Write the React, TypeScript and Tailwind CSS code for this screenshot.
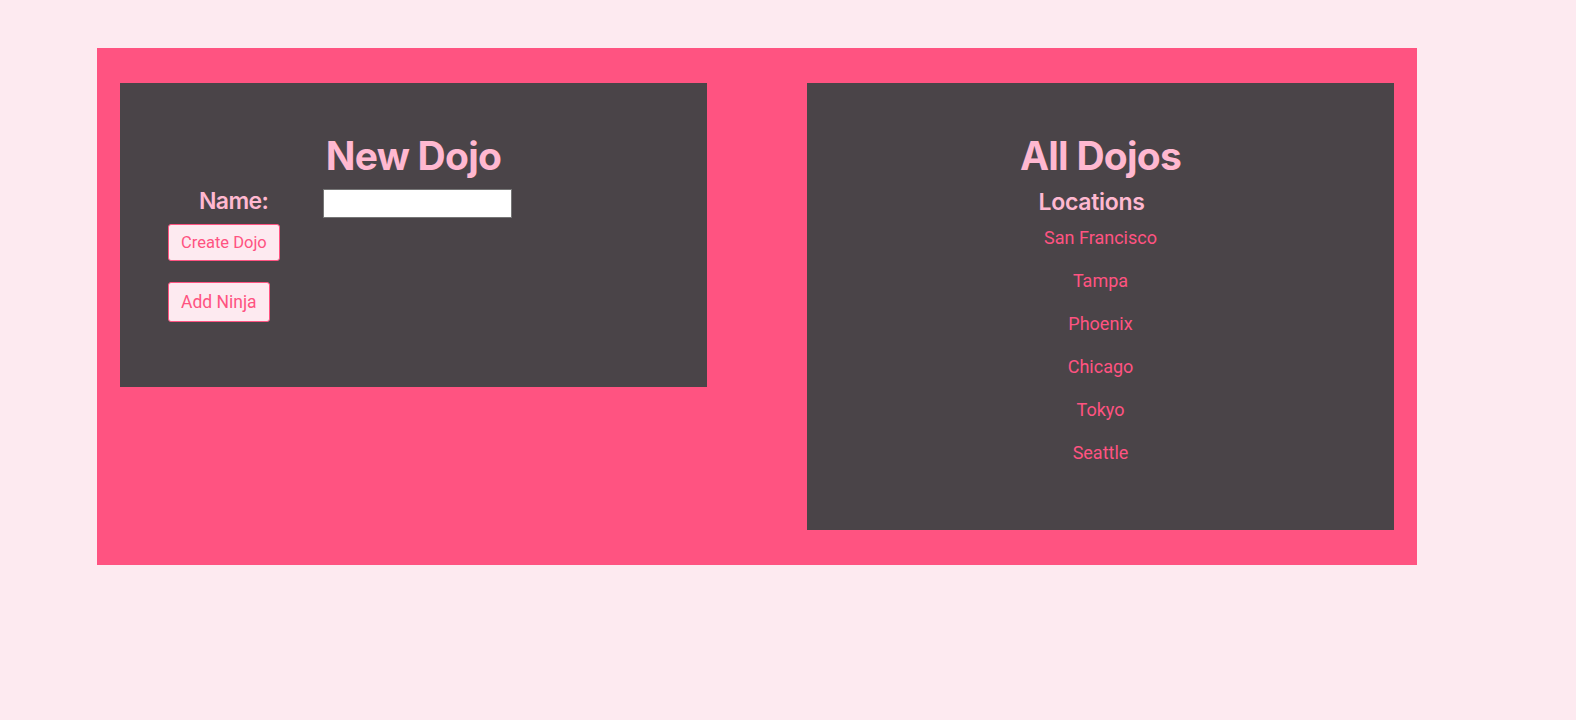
import React from "react";

const inter = { fontFamily: "Inter, 'Noto Sans', sans-serif" };
const roboto = { fontFamily: "Roboto, Inter, sans-serif" };

export default function App() {
  const locations = ["San Francisco", "Tampa", "Phoenix", "Chicago", "Tokyo", "Seattle"];
  return (
    <div className="min-h-[720px] w-full bg-[#fdeaf0]" style={inter}>
      <div className="pt-[48px] pl-[97px]">
        <div className="flex w-[1320px] items-start gap-[100px] bg-[#ff5381] px-[23px] pb-[35px] pt-[35px]">
          {/* Left panel */}
          <div className="flex w-[587px] flex-col bg-[#4a4448] pb-[65px] pt-[49px]">
            <h1 className="text-center text-[39px] font-bold leading-[48px] tracking-[-0.75px] text-[#ffb8d0]">
              New Dojo
            </h1>
            <div className="mt-[9px] flex items-start">
              <div className="ml-[79px] w-[124px]">
                <span className="text-[23px] font-semibold leading-[24px] tracking-[-0.6px] text-[#ffb8d0]">
                  Name:
                </span>
              </div>
              <input
                type="text"
                className="h-[29px] w-[189px] border border-[#767676] bg-white outline-none"
              />
            </div>
            <div className="ml-[48px] mt-[6px] flex flex-col items-start" style={roboto}>
              <button className="h-[37px] rounded-[3px] border border-[#ff5381] bg-[#fdeaf0] px-[12px] text-[16.5px] leading-[20px] text-[#ff5381]">
                Create Dojo
              </button>
              <button className="mt-[21px] h-[40px] rounded-[3px] border border-[#ff5381] bg-[#fdeaf0] px-[12px] text-[17.5px] leading-[24px] text-[#ff5381]">
                Add Ninja
              </button>
            </div>
          </div>
          {/* Right panel */}
          <div className="flex w-[587px] flex-col items-center bg-[#4a4448] pb-[64px] pt-[49px]">
            <h1 className="text-center text-[39px] font-bold leading-[48px] tracking-[-0.75px] text-[#ffb8d0]">
              All Dojos
            </h1>
            <h2 className="mt-[10px] pr-[18px] text-[23px] font-semibold leading-[24px] tracking-[-0.3px] text-[#ffb8d0]">
              Locations
            </h2>
            <ul className="mt-[10px] flex flex-col items-center gap-[16px]" style={roboto}>
              {locations.map((l) => (
                <li key={l} className="text-[18px] leading-[27px] text-[#ff5381]">
                  {l}
                </li>
              ))}
            </ul>
          </div>
        </div>
      </div>
    </div>
  );
}
